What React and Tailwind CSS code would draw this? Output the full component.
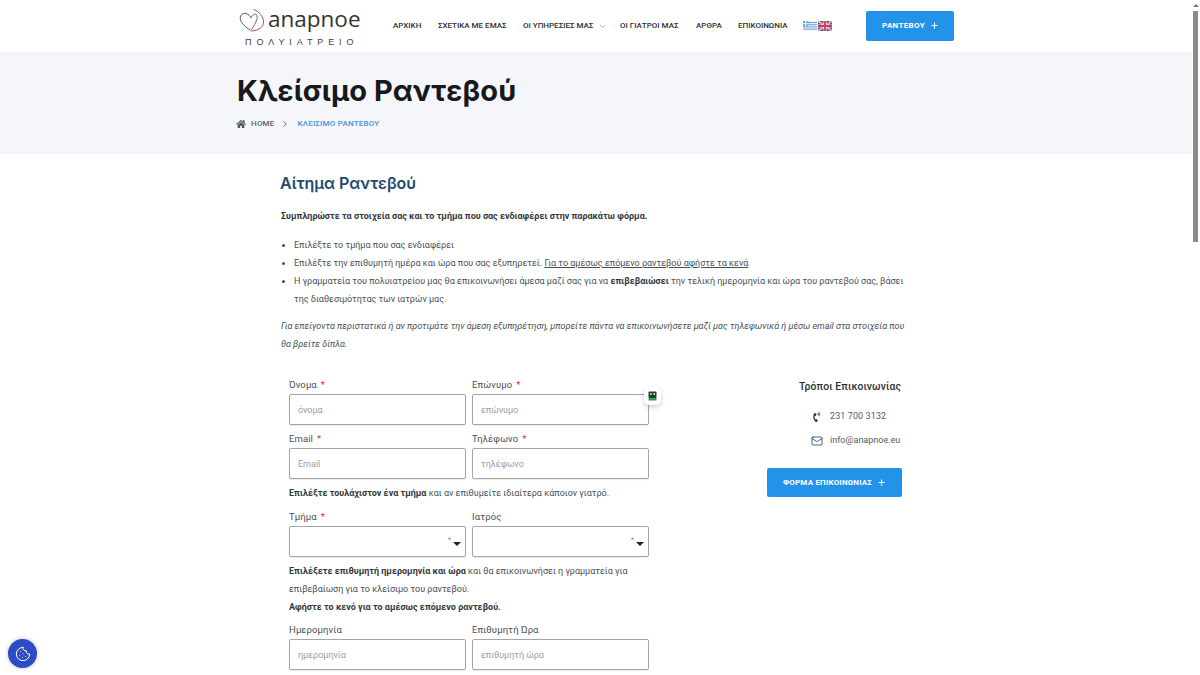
import { Cookie, ChevronDown, ChevronRight, Mail, Plus } from 'lucide-react';
import { FaHome, FaPhoneVolume } from 'react-icons/fa';

const navItems = [
  { label: 'ΑΡΧΙΚΗ', width: 'w-[45px]' },
  { label: 'ΣΧΕΤΙΚΑ ΜΕ ΕΜΑΣ', width: 'w-[85px]' },
  { label: 'ΟΙ ΥΠΗΡΕΣΙΕΣ ΜΑΣ', width: 'w-[97px]', caret: true },
  { label: 'ΟΙ ΓΙΑΤΡΟΙ ΜΑΣ', width: 'w-[76px]' },
  { label: 'ΑΡΘΡΑ', width: 'w-[42px]' },
  { label: 'ΕΠΙΚΟΙΝΩΝΙΑ', width: 'w-[65px]' },
];

const Logo = () => (
  <div className="w-[155px] h-[52px] flex flex-col">
    <div className="flex items-center h-[34px] pt-[6px]">
      <svg width="27" height="27" viewBox="0 0 33 30" fill="none" className="ml-[1px]">
        <path d="M14 27C8 23 2 18 1.5 12.5C1.2 8 5 5.5 8.5 6.5C11.5 7.2 13.5 9.5 14.5 12" stroke="#555" strokeWidth="1.2" />
        <path d="M14.5 12C16 8.5 19 6.5 21 7.5C23.5 9 22 15 19 20C17.5 23 15.5 25.5 14 27" stroke="#666" strokeWidth="1.2" />
        <path d="M18 1.5C25 4 30 11 30 17C30 23 24 27 15 28" stroke="#c43a50" strokeWidth="1.2" />
      </svg>
      <span className="font-['Open_Sans',sans-serif] text-[22.5px] leading-none text-[#333] ml-[2px] -mt-[2px]">anapnoe</span>
    </div>
    <div className="font-['Liberation_Sans',sans-serif] text-[9px] leading-[10px] tracking-[4.9px] text-[#444] ml-[7px] mt-[3px] whitespace-nowrap">ΠΟΛΥΙΑΤΡΕΙΟ</div>
  </div>
);

const Flags = () => (
  <div className="flex gap-[1px]">
    <svg width="14" height="10" viewBox="0 0 14 10">
      <rect width="14" height="10" fill="#f4f8fc" />
      <rect y="1" width="14" height="1.1" fill="#6fa3d8" />
      <rect y="3.2" width="14" height="1.1" fill="#6fa3d8" />
      <rect y="5.4" width="14" height="1.1" fill="#6fa3d8" />
      <rect y="7.6" width="14" height="1.1" fill="#6fa3d8" />
      <rect width="5.4" height="5.4" fill="#6fa3d8" />
      <rect x="2.2" width="1" height="5.4" fill="#f4f8fc" />
      <rect y="2.2" width="5.4" height="1" fill="#f4f8fc" />
    </svg>
    <svg width="14" height="10" viewBox="0 0 14 10">
      <rect width="14" height="10" fill="#3a4a86" />
      <path d="M0 0L14 10M14 0L0 10" stroke="#f3e6ea" strokeWidth="2" />
      <path d="M0 0L14 10M14 0L0 10" stroke="#d2486a" strokeWidth="0.7" />
      <path d="M7 0V10M0 5H14" stroke="#f3e6ea" strokeWidth="3.2" />
      <path d="M7 0V10M0 5H14" stroke="#d2385a" strokeWidth="1.8" />
    </svg>
  </div>
);

const Header = () => (
  <header className="h-[52px] bg-white flex pl-[238px]">
    <Logo />
    <nav className="flex items-center h-[52px] text-[#2a2f36] font-['Roboto',sans-serif] font-medium text-[8px]">
      {navItems.map((item) => (
        <span key={item.label} className={`${item.width} flex items-center whitespace-nowrap`}>
          {item.label}
          {item.caret && <ChevronDown size={9} strokeWidth={1.3} className="ml-[5px] text-[#555]" />}
        </span>
      ))}
      <Flags />
      <button className="ml-[34px] w-[88px] h-[30px] bg-[#2393ea] rounded-[2px] text-white font-bold text-[8px] flex items-center justify-center gap-[5px] tracking-[0.3px] pl-[1px]">
        ΡΑΝΤΕΒΟΥ
        <Plus size={9} strokeWidth={3} className="-mt-[1px]" />
      </button>
    </nav>
  </header>
);

const Banner = () => (
  <section className="h-[102px] bg-[#f4f6fa] pl-[237px] flex flex-col">
    <h1 className="font-['Inter',sans-serif] font-bold text-[29px] leading-[40px] text-[#17191c] mt-[19px] tracking-[0.1px]">Κλείσιμο Ραντεβού</h1>
    <div className="flex items-center mt-[7px] h-[12px] font-['Roboto',sans-serif] font-medium text-[8px]">
      <FaHome size={10} className="text-[#50565e] -ml-[1px]" />
      <span className="ml-[5px] text-[#5b626b] tracking-[0.2px]">HOME</span>
      <ChevronRight size={10} strokeWidth={2} className="ml-[5px] text-[#50565e]" />
      <span className="ml-[8px] text-[#4a90d9] tracking-[0.2px]">ΚΛΕΙΣΙΜΟ ΡΑΝΤΕΒΟΥ</span>
    </div>
  </section>
);

const Required = () => <span className="text-[#d6304e] ml-[4px]">*</span>;

const Field = ({ label, required, placeholder, select }) => (
  <div className="w-[177px]">
    <label className="block h-[18px] text-[9.5px] leading-[17px] text-[#4a4f57] tracking-[0.1px]">
      {label}
      {required && <Required />}
    </label>
    <div className="h-[31px] border border-[#a3a5a8] rounded-[2px] bg-white shadow-[0_1px_1px_rgba(0,0,0,0.08)] pl-[8px] flex items-center text-[9px] text-[#9a9ea3] relative">
      {placeholder}
      {select && (
        <>
          <span className="absolute right-[14px] top-[10px] text-[7px] leading-none text-[#888]">*</span>
          <span className="absolute right-[4px] top-[15px] border-x-[4px] border-x-transparent border-t-[4px] border-t-[#222]" />
        </>
      )}
    </div>
  </div>
);

const BotBadge = () => (
  <div className="absolute left-[355px] top-[11px] w-[17px] h-[18px] bg-white rounded-[5px] shadow-[0_2px_5px_rgba(0,0,0,0.2)] flex items-center justify-center">
    <svg width="9" height="10" viewBox="0 0 9 10">
      <rect x="0.5" y="0.5" width="8" height="6.5" rx="1" fill="#2d3a33" />
      <rect x="2" y="2.2" width="1.6" height="1.6" fill="#dfe" />
      <rect x="5.4" y="2.2" width="1.6" height="1.6" fill="#dfe" />
      <rect x="0.5" y="7" width="8" height="2.5" fill="#2f9e54" />
    </svg>
  </div>
);

const Form = () => (
  <div className="w-[360px] ml-[8px] text-[9px] leading-[18px] text-[#4a4f57]">
    <div className="relative flex gap-[6px]">
      <Field label="Όνομα" required placeholder="όνομα" />
      <Field label="Επώνυμο" required placeholder="επώνυμο" />
      <BotBadge />
    </div>
    <div className="flex gap-[6px] mt-[5px]">
      <Field label="Email" required placeholder="Email" />
      <Field label="Τηλέφωνο" required placeholder="τηλέφωνο" />
    </div>
    <p className="mt-[5px]"><b className="text-[#33373d]">Επιλέξτε τουλάχιστον ένα τμήμα</b> και αν επιθυμείτε ιδιαίτερα κάποιον γιατρό.</p>
    <div className="flex gap-[6px] mt-[6px]">
      <Field label="Τμήμα" required select />
      <Field label="Ιατρός" select />
    </div>
    <p className="mt-[5px]"><b className="text-[#33373d]">Επιλέξετε επιθυμητή ημερομηνία και ώρα</b> και θα επικοινωνήσει η γραμματεία για επιβεβαίωση για το κλείσιμο του ραντεβού.</p>
    <p><b className="text-[#33373d]">Αφήστε το κενό για το αμέσως επόμενο ραντεβού.</b></p>
    <div className="flex gap-[6px] mt-[5px]">
      <Field label="Ημερομηνία" placeholder="ημερομηνία" />
      <Field label="Επιθυμητή Ώρα" placeholder="επιθυμητή ώρα" />
    </div>
  </div>
);

const ContactBox = () => (
  <aside className="w-[135px] ml-[118px] flex flex-col pt-[2px]">
    <h3 className="text-[10.4px] leading-[18px] font-medium text-[#2b3038] tracking-[0.1px] whitespace-nowrap self-end mr-[1px]">Τρόποι Επικοινωνίας</h3>
    <div className="flex items-center mt-[12px] h-[18px] ml-[45px] text-[9px] text-[#555b63] tracking-[0.1px]">
      <FaPhoneVolume size={10} className="text-[#1d3f5e] -rotate-12" />
      <span className="ml-[8px] whitespace-nowrap">231 700 3132</span>
    </div>
    <div className="flex items-center mt-[6px] h-[18px] ml-[44px] text-[9px] text-[#555b63]">
      <Mail size={12} strokeWidth={1.6} className="text-[#1d3f5e]" />
      <span className="ml-[7px] whitespace-nowrap">info@anapnoe.eu</span>
    </div>
    <button className="w-[135px] h-[29px] mt-[18px] bg-[#2393ea] rounded-[2px] text-white font-bold text-[8px] flex items-center justify-center gap-[5px] tracking-[0.2px]">
      ΦΟΡΜΑ ΕΠΙΚΟΙΝΩΝΙΑΣ
      <Plus size={9} strokeWidth={3} />
    </button>
  </aside>
);

const Content = () => (
  <main className="pl-[281px] font-['Roboto',sans-serif]">
    <h2 className="font-['Inter',sans-serif] font-semibold text-[16px] leading-[24px] text-[#1d4a73] mt-[17px] -ml-[1px]">Αίτημα Ραντεβού</h2>
    <div className="w-[624px] text-[9px] leading-[18px] text-[#4a4f57]">
      <p className="mt-[12px] font-bold text-[#33373d]">Συμπληρώστε τα στοιχεία σας και το τμήμα που σας ενδιαφέρει στην παρακάτω φόρμα.</p>
      <ul className="list-disc pl-[13px] mt-[11px]">
        <li>Επιλέξτε το τμήμα που σας ενδιαφέρει</li>
        <li>Επιλέξτε την επιθυμητή ημέρα και ώρα που σας εξυπηρετεί. <u>Για το αμέσως επόμενο ραντεβού αφήστε τα κενά</u></li>
        <li>Η γραμματεία του πολυιατρείου μας θα επικοινωνήσει άμεσα μαζί σας για να <b className="text-[#33373d]">επιβεβαιώσει</b> την τελική ημερομηνία και ώρα του ραντεβού σας, βάσει της διαθεσιμότητας των ιατρών μας.</li>
      </ul>
      <p className="italic mt-[9px]">Για επείγοντα περιστατικά ή αν προτιμάτε την άμεση εξυπηρέτηση, μπορείτε πάντα να επικοινωνήσετε μαζί μας τηλεφωνικά ή μέσω email στα στοιχεία που θα βρείτε δίπλα.</p>
    </div>
    <div className="flex mt-[23px]">
      <Form />
      <ContactBox />
    </div>
  </main>
);

const Scrollbar = () => (
  <div className="absolute right-0 top-0 bottom-0 w-[8px] bg-white">
    <div className="mx-auto mt-[4px] w-0 h-0 border-x-[3px] border-x-transparent border-b-[3px] border-b-[#777]" />
    <div className="ml-[1px] mt-[4px] w-[5px] h-[231px] bg-[#8b8b8b]" />
  </div>
);

const CookieButton = () => (
  <button className="absolute left-[8px] top-[639px] w-[29px] h-[29px] rounded-full bg-[#2c4bc4] flex items-center justify-center shadow-[0_0_4px_rgba(0,0,0,0.25)]">
    <Cookie size={16} strokeWidth={1.5} className="text-white" />
  </button>
);

export default function App() {
  return (
    <div className="relative w-[1200px] h-[675px] overflow-hidden bg-white font-['Roboto',sans-serif]">
      <Header />
      <Banner />
      <Content />
      <Scrollbar />
      <CookieButton />
    </div>
  );
}
